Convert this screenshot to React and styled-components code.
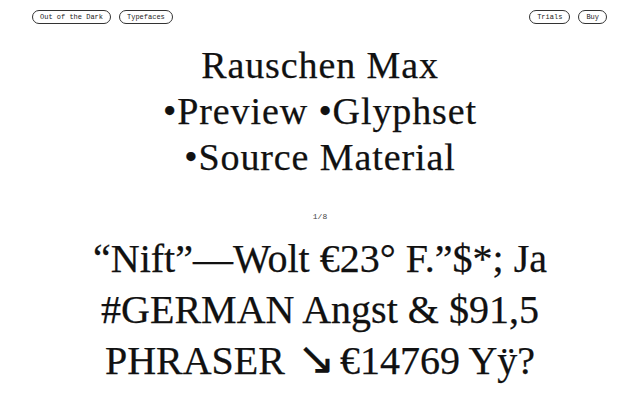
import React from 'react';
import styled, { createGlobalStyle } from 'styled-components';

const GlobalStyle = createGlobalStyle`
  html, body {
    margin: 0;
    padding: 0;
    background: #ffffff;
  }
  body {
    font-family: "Liberation Serif", "Times New Roman", serif;
    color: #111;
  }
`;

const Page = styled.div`
  width: 640px;
  height: 400px;
  overflow: hidden;
  display: flex;
  flex-direction: column;
  align-items: stretch;
`;

const Header = styled.header`
  display: flex;
  justify-content: space-between;
  align-items: center;
  padding: 10px 33px 0 32px;
`;

const NavGroup = styled.nav`
  display: flex;
  gap: 8px;
`;

const Pill = styled.a`
  display: inline-flex;
  align-items: center;
  height: 14px;
  box-sizing: border-box;
  padding: 0 7px;
  border: 1px solid #333;
  border-radius: 8px;
  font-family: "Liberation Mono", "DejaVu Sans Mono", monospace;
  font-size: 7px;
  color: #222;
  text-decoration: none;
  white-space: nowrap;
`;

const Title = styled.h1`
  margin: 18px 0 0 0;
  font-weight: normal;
  font-size: 38px;
  line-height: 46px;
  letter-spacing: 0.9px;
  text-align: center;
  color: #111;
  -webkit-text-stroke: 0.25px #111;
`;

const Counter = styled.div`
  margin-top: 31px;
  font-family: "Liberation Mono", "DejaVu Sans Mono", monospace;
  font-size: 8px;
  line-height: 12px;
  text-align: center;
  color: #444;
`;

const Sample = styled.p`
  margin: 10px 0 0 0;
  font-size: 40px;
  line-height: 51px;
  text-align: center;
  color: #111;
  -webkit-text-stroke: 0.25px #111;
`;

const Arrow = styled.span`
  font-size: 46px;
  line-height: 1;
  margin: 0 4px 0 2px;
`;

export default function App() {
  return (
    <>
      <GlobalStyle />
      <Page>
        <Header>
          <NavGroup>
            <Pill href="#">Out of the Dark</Pill>
            <Pill href="#">Typefaces</Pill>
          </NavGroup>
          <NavGroup>
            <Pill href="#">Trials</Pill>
            <Pill href="#">Buy</Pill>
          </NavGroup>
        </Header>
        <Title>
          Rauschen Max
          <br />
          •Preview •Glyphset
          <br />
          •Source Material
        </Title>
        <Counter>1/8</Counter>
        <Sample>
          “Nift”—Wolt €23° F.”$*; Ja
          <br />
          #GERMAN Angst &amp; $91,5
          <br />
          PHRASER <Arrow>↘</Arrow>€14769 Yÿ?
        </Sample>
      </Page>
    </>
  );
}
